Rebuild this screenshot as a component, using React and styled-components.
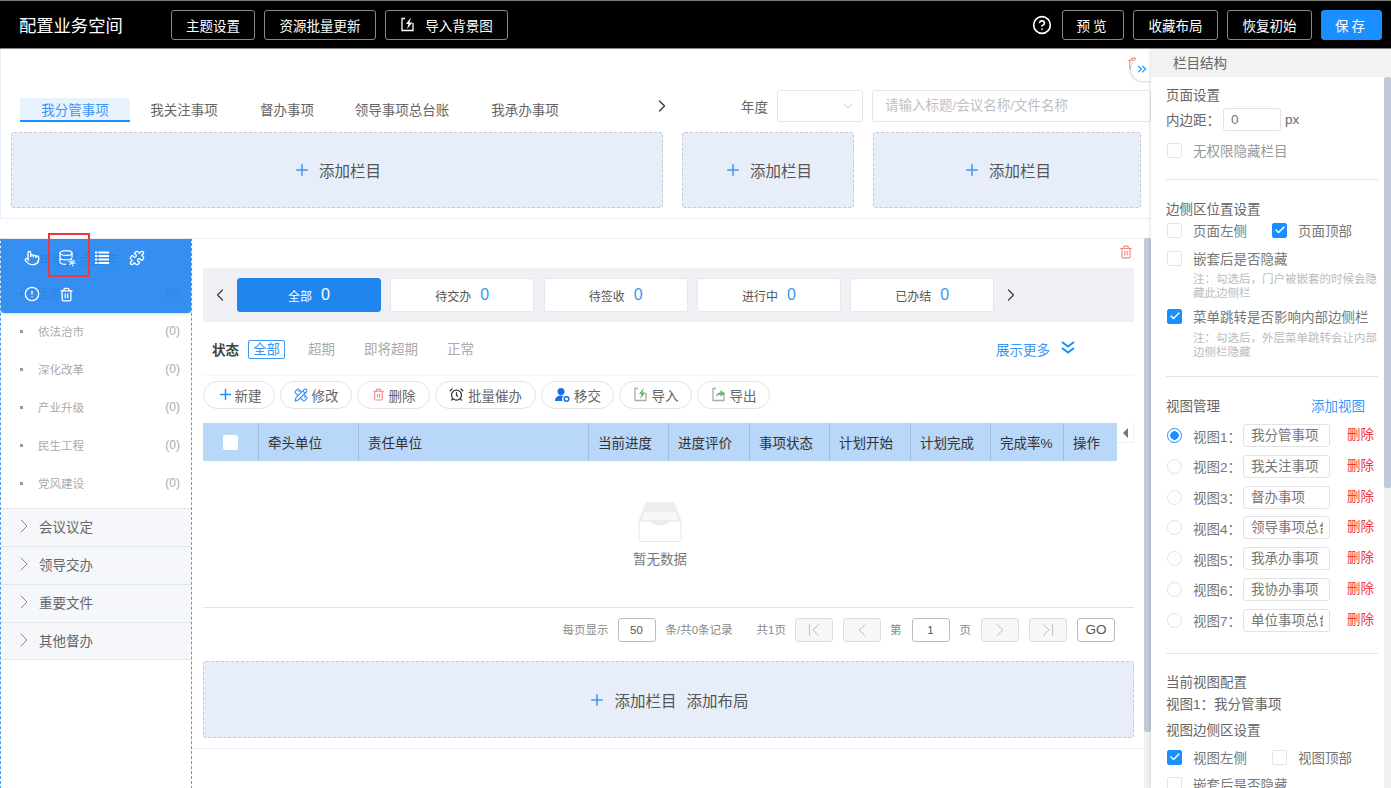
import styled, { createGlobalStyle } from "styled-components";
import {
  AlarmClock,
  Check,
  ChevronDown,
  ChevronFirst,
  ChevronLast,
  ChevronLeft,
  ChevronRight,
  ChevronsRight,
  CircleAlert,
  CircleHelp,
  PencilRuler,
  Plus,
  Pointer,
  Puzzle,
  Trash2,
} from "lucide-react";

const GlobalStyle = createGlobalStyle`
  html, body {
    margin: 0;
    padding: 0;
    background: #fff;
    overflow: hidden;
  }

  * {
    box-sizing: border-box;
  }

  body {
    font-family: "Liberation Sans", "Noto Sans CJK SC", sans-serif;
    color: #666;
  }
`;

const Page = styled.div`
  width: 1391px;
  height: 788px;
  overflow: hidden;
  display: flex;
  flex-direction: column;
`;

const Header = styled.header`
  height: 49px;
  flex: none;
  display: flex;
  align-items: center;
  padding: 0 9px 0 19px;
  background: #000;
  border-top: 1px solid #777;
  border-bottom: 1px solid #888;
`;

const Logo = styled.div`
  width: 152px;
  font-size: 17.3px;
  color: #fff;
`;

const HeadButton = styled.button`
  height: 30px;
  width: ${(p) => p.$w}px;
  margin-left: ${(p) => p.$ml || 0}px;
  display: flex;
  align-items: center;
  justify-content: center;
  gap: 10px;
  padding: 0;
  font: inherit;
  font-size: 13.5px;
  letter-spacing: ${(p) => p.$ls || 0}px;
  color: #fff;
  background: ${(p) => (p.$primary ? "#1a8fff" : "#000")};
  border: 1px solid ${(p) => (p.$primary ? "#1a8fff" : "#888")};
  border-radius: 3px;
`;

const HeaderRight = styled.div`
  margin-left: auto;
  display: flex;
  align-items: center;
  color: #fff;
`;

const Workspace = styled.div`
  flex: 1;
  min-height: 0;
  display: flex;
`;

const Main = styled.main`
  width: 1151px;
  flex: none;
  display: flex;
  flex-direction: column;
  position: relative;
`;

const TopSection = styled.section`
  height: 170px;
  flex: none;
  padding: 41px 0 0 10px;
  border: 1px solid #e9effa;
  border-top: 0;
  border-right: 0;
`;

const TabsRow = styled.div`
  display: flex;
  align-items: center;
  height: 32px;
`;

const Tabs = styled.div`
  display: flex;
  align-items: flex-end;
  align-self: flex-end;
  margin-left: 9px;
`;

const Tab = styled.div`
  width: ${(p) => p.$w}px;
  height: 24px;
  padding-top: 1px;
  line-height: 24px;
  text-align: center;
  font-size: 13.5px;
  color: ${(p) => (p.$active ? "#3d96f5" : "#666")};
  background: ${(p) => (p.$active ? "#e8f3fd" : "transparent")};
  border-bottom: 2px solid ${(p) => (p.$active ? "#1a8fff" : "transparent")};
  border-radius: 3px 3px 0 0;
`;

const TabNext = styled.div`
  width: 20px;
  margin-left: 70px;
  display: flex;
  justify-content: center;
  color: #333;
`;

const YearLabel = styled.div`
  margin-left: 69px;
  font-size: 13.5px;
`;

const YearSelect = styled.div`
  width: 86px;
  height: 32px;
  margin-left: 9px;
  display: flex;
  align-items: center;
  justify-content: flex-end;
  padding-right: 6px;
  color: #ccc;
  border: 1px solid #e5e5e5;
  border-radius: 3px;
`;

const SearchBox = styled.div`
  width: 279px;
  height: 32px;
  margin-left: 9px;
  padding-left: 12px;
  line-height: 30px;
  font-size: 13.5px;
  color: #bfbfbf;
  border: 1px solid #e5e5e5;
  border-radius: 3px;
`;

const AddGrid = styled.div`
  display: grid;
  grid-template-columns: 652px 172px 268px;
  column-gap: 19px;
  margin-top: 10px;
`;

const AddCard = styled.div`
  height: ${(p) => p.$h}px;
  display: flex;
  align-items: center;
  justify-content: center;
  gap: 8px;
  font-size: 15.5px;
  color: #555;
  background: #e8eef9;
  border: 1px dashed #c5cbd8;
  border-radius: 3px;

  svg {
    color: #3d96f5;
  }
`;

const InlineText = styled.span`
  margin-left: ${(p) => p.$ml || 0}px;
`;

const TopTrash = styled.div`
  position: absolute;
  top: 7px;
  left: 1127px;
  color: #f08a8a;
`;

const CollapseTab = styled.div`
  position: absolute;
  top: 8px;
  left: 1131px;
  width: 22px;
  height: 24px;
  display: flex;
  align-items: center;
  justify-content: center;
  color: #1a8fff;
  background: #fff;
  border-radius: 12px 0 0 12px;
  box-shadow: -1px 1px 2px rgba(0, 0, 0, 0.15);
`;

const LowerRow = styled.div`
  flex: none;
  height: 551px;
  margin-top: 19px;
  display: flex;
`;

const Sidebar = styled.aside`
  width: 192px;
  flex: none;
  position: relative;
  border-left: 1px dashed #4a9cf5;
  border-right: 1px dashed #4a9cf5;
  border-top: 1px solid #eef0f5;
`;

const SideTitle = styled.div`
  height: 35px;
  padding: 10px 0 0 38px;
  font-size: 13px;
  color: #3d96f5;
`;

const SideItem = styled.div`
  height: 38px;
  display: flex;
  align-items: center;
  padding: 0 11px 0 19px;
  font-size: 11.5px;
  color: #aaa;

  &::before {
    content: "";
    width: 3px;
    height: 3px;
    margin-right: 15px;
    background: #999;
  }

  span:last-child {
    margin-left: auto;
    font-size: 12px;
  }
`;

const SideGroups = styled.div`
  margin-top: 6px;
`;

const SideGroup = styled.div`
  height: 38px;
  display: flex;
  align-items: center;
  gap: 3px;
  padding: 0 0 3px 11px;
  font-size: 13.5px;
  color: #666;
  background: #f5f7fb;
  border-top: 1px solid #e2e6ee;

  &:last-child {
    border-bottom: 1px solid #e2e6ee;
  }

  svg {
    color: #888;
  }
`;

const HoverMask = styled.div`
  position: absolute;
  top: 0;
  left: 0;
  width: 190px;
  height: 74px;
  display: grid;
  grid-template-columns: repeat(4, 35px);
  grid-auto-rows: 36px;
  align-items: center;
  justify-items: center;
  padding: 1px 0 0 13px;
  color: #fff;
  background: rgba(31, 131, 238, 0.9);
  border-radius: 0 0 3px 3px;
  box-shadow: 0 1px 3px rgba(0, 0, 0, 0.15);
`;

const RedMark = styled.div`
  position: absolute;
  top: -6px;
  left: 47px;
  width: 42px;
  height: 44px;
  border: 2px solid #ee3a3a;
`;

const Content = styled.section`
  flex: 1;
  height: 511px;
  position: relative;
  padding: 29px 10px 0 11px;
  border-top: 1px solid #eef0f5;
  border-bottom: 1px solid #eef0f5;
`;

const ContentTrash = styled.div`
  position: absolute;
  top: 6px;
  right: 11px;
  color: #f08a8a;
`;

const StatStrip = styled.div`
  height: 54px;
  display: flex;
  align-items: center;
  background: #f0f1f5;
  color: #444;
`;

const StripArrow = styled.div`
  width: 34px;
  display: flex;
  justify-content: center;
  flex: none;
`;

const StatList = styled.div`
  display: flex;
  gap: 9.3px;
`;

const StatCard = styled.div`
  width: 144px;
  height: 34px;
  display: flex;
  align-items: center;
  justify-content: center;
  gap: 9px;
  font-size: 12px;
  color: ${(p) => (p.$active ? "#fff" : "#555")};
  background: ${(p) => (p.$active ? "#2086ee" : "#fff")};
  border: 1px solid ${(p) => (p.$active ? "#2086ee" : "#e6e8ee")};
  border-radius: 3px;

  b {
    font-size: 16px;
    font-weight: 400;
    color: ${(p) => (p.$active ? "#fff" : "#3d96f5")};
  }
`;

const FilterRow = styled.div`
  height: 54px;
  display: flex;
  align-items: center;
  padding: 1px 59px 0 9px;
  font-size: 13.5px;
  color: #aaa;
  border-bottom: 1px solid #f6f6f6;
`;

const FilterLabel = styled.b`
  color: #444;
  margin-right: 9px;
`;

const FilterChip = styled.span`
  margin-right: ${(p) => p.$mr || 0}px;
  padding: 0 4px;
  line-height: 17px;
  color: ${(p) => (p.$active ? "#3d96f5" : "#aaa")};
  border: 1px solid ${(p) => (p.$active ? "#3d96f5" : "transparent")};
  border-radius: 2px;
`;

const MoreLink = styled.div`
  margin-left: auto;
  display: flex;
  align-items: center;
  gap: 11px;
  color: #3d96f5;

  svg {
    color: #1a8fff;
    margin-top: -3px;
  }
`;

const Toolbar = styled.div`
  display: flex;
  gap: 5px;
  margin-top: 5px;
`;

const ToolButton = styled.div`
  width: ${(p) => p.$w}px;
  height: 28px;
  display: flex;
  align-items: center;
  justify-content: center;
  gap: ${(p) => p.$gap || 4}px;
  padding-bottom: 1px;
  font-size: 13.5px;
  color: #666;
  background: #fff;
  border: 1px solid #e4e4e4;
  border-radius: 14px;

  svg {
    color: ${(p) => p.$icon};
  }
`;

const TableWrap = styled.div`
  margin-top: 14px;
  height: 185px;
  border-bottom: 1px solid #e2e2e2;
`;

const TableHead = styled.div`
  height: 38px;
  display: flex;
`;

const HeadCells = styled.div`
  width: 914px;
  display: flex;
  background: #b9d7f8;
`;

const HeadCell = styled.div`
  width: ${(p) => p.$w}px;
  display: flex;
  align-items: center;
  justify-content: ${(p) => (p.$center ? "center" : "flex-start")};
  padding-left: ${(p) => (p.$center ? 0 : 9)}px;
  font-size: 13.5px;
  color: #333;
  border-left: ${(p) => (p.$first ? "0" : "1px solid #a3bedd")};
`;

const HeadCheck = styled.i`
  width: 15px;
  height: 15px;
  background: #fff;
  border-radius: 2px;
`;

const ColumnToggle = styled.div`
  flex: 1;
  height: 20px;
  display: flex;
  align-items: center;
  justify-content: center;
  border-right: 1px solid #eee;
  border-bottom: 1px solid #eee;

  &::before {
    content: "";
    border: 5px solid transparent;
    border-left: 0;
    border-right: 5px solid #777;
  }
`;

const Empty = styled.div`
  display: flex;
  flex-direction: column;
  align-items: center;
  width: 914px;
  padding-top: 40px;
  font-size: 13.5px;
  color: #777;

  svg {
    margin-bottom: 6px;
  }
`;

const Pager = styled.div`
  height: 43px;
  margin-top: 10px;
  display: flex;
  align-items: flex-start;
  justify-content: flex-end;
  padding-right: 19px;
  font-size: 11.5px;
  line-height: 24px;
  color: #888;
`;

const PagerText = styled.span`
  margin-left: ${(p) => p.$ml}px;
`;

const PagerBox = styled.div`
  width: 38px;
  height: 24px;
  margin-left: ${(p) => p.$ml}px;
  display: flex;
  align-items: center;
  justify-content: center;
  font-size: ${(p) => (p.$big ? 13.5 : 11.5)}px;
  color: ${(p) => (p.$off ? "#bbb" : "#555")};
  background: ${(p) => (p.$off ? "#f7f7f7" : "#fff")};
  border: 1px solid ${(p) => (p.$off ? "#ddd" : "#bbb")};
  border-radius: 3px;
`;

const ScrollRail = styled.div`
  width: 7px;
  flex: none;
  background: #f1f1f1;
`;

const RailThumb = styled.div`
  height: ${(p) => p.$h}px;
  background: #c0c9d8;
  border-radius: 2px;
`;

const Panel = styled.aside`
  flex: 1;
  position: relative;
  z-index: 2;
  display: flex;
  flex-direction: column;
  background: #fff;
  box-shadow: -1px 0 3px rgba(0, 0, 0, 0.12);
`;

const PanelTitle = styled.div`
  height: 28px;
  flex: none;
  padding-left: 22px;
  line-height: 29px;
  font-size: 13.5px;
  color: #666;
  background: #f2f2f2;
`;

const PanelScroll = styled.div`
  flex: 1;
  min-height: 0;
  display: flex;
`;

const PanelBody = styled.div`
  flex: 1;
  overflow: hidden;
  padding: 0 6px 0 15px;
  font-size: 13.5px;
  color: #666;
`;

const SectionTitle = styled.div`
  height: 20px;
  line-height: 20px;
  margin-top: ${(p) => p.$mt}px;
  display: flex;
  justify-content: space-between;
  padding-right: ${(p) => (p.$pr ? 13 : 0)}px;

  a {
    color: #3d96f5;
  }
`;

const PaddingRow = styled.div`
  height: 24px;
  margin-top: 1px;
  display: flex;
  align-items: center;
`;

const SmallInput = styled.div`
  width: ${(p) => p.$w}px;
  height: 23px;
  margin-left: ${(p) => p.$ml || 0}px;
  padding-left: 7px;
  overflow: hidden;
  white-space: nowrap;
  line-height: 21px;
  font-size: 13.5px;
  color: #777;
  border: 1px solid #e2e2e2;
  border-radius: 3px;
`;

const CheckRow = styled.div`
  height: 20px;
  margin-top: ${(p) => p.$mt}px;
  display: flex;
  align-items: center;
  font-size: 13.5px;
  color: ${(p) => (p.$dim ? "#999" : "#777")};
`;

const CheckBox = styled.span`
  width: 15px;
  height: 15px;
  flex: none;
  margin: 0 11px 0 ${(p) => p.$ml || 1}px;
  display: flex;
  align-items: center;
  justify-content: center;
  color: #fff;
  background: ${(p) => (p.$on ? "#1a8fff" : "#fff")};
  border: 1px solid ${(p) => (p.$on ? "#1a8fff" : "#e4e4e4")};
  border-radius: 2px;
`;

const Note = styled.div`
  margin-top: ${(p) => p.$mt}px;
  padding-left: 27px;
  font-size: 11.5px;
  line-height: 14px;
  color: #bbb;
`;

const Divider = styled.div`
  height: 1px;
  margin-top: ${(p) => p.$mt}px;
  background: #e4e4e4;
`;

const ViewList = styled.div`
  display: grid;
  row-gap: 7.8px;
  margin-top: 7px;
`;

const ViewRow = styled.div`
  height: 23px;
  display: flex;
  align-items: center;
  color: #777;
`;

const Radio = styled.span`
  width: 15px;
  height: 15px;
  margin: 0 11px 0 1px;
  flex: none;
  border: 1px solid ${(p) => (p.$on ? "#1a8fff" : "#e2e2e2")};
  border-radius: 50%;
  background: ${(p) =>
    p.$on ? "radial-gradient(circle, #1a8fff 0 4px, #fff 4.5px)" : "#fff"};
`;

const ViewName = styled.span`
  width: 50px;
  flex: none;
`;

const RemoveLink = styled.span`
  margin: -5px 0 0 17px;
  color: #f5333f;
`;

const InputClip = styled.div`
  width: 72px;
  overflow: hidden;
`;

const tabs = [
  { label: "我分管事项", w: 110, active: true },
  { label: "我关注事项", w: 108 },
  { label: "督办事项", w: 98 },
  { label: "领导事项总台账", w: 132 },
  { label: "我承办事项", w: 114 },
];

const sideItems = ["依法治市", "深化改革", "产业升级", "民生工程", "党风建设"];
const sideGroups = ["会议议定", "领导交办", "重要文件", "其他督办"];
const stats = ["全部", "待交办", "待签收", "进行中", "已办结"];

const columns = [
  { label: "牵头单位", w: 100 },
  { label: "责任单位", w: 230 },
  { label: "当前进度", w: 80 },
  { label: "进度评价", w: 81 },
  { label: "事项状态", w: 80 },
  { label: "计划开始", w: 81 },
  { label: "计划完成", w: 80 },
  { label: "完成率%", w: 73 },
  { label: "操作", w: 54 },
];

const views = [
  "我分管事项",
  "我关注事项",
  "督办事项",
  "领导事项总台账",
  "我承办事项",
  "我协办事项",
  "单位事项总台账",
];

const DatabaseGear = () => (
  <svg width="18" height="18" viewBox="0 0 18 18" fill="none" stroke="currentColor" strokeWidth="1.3">
    <ellipse cx="8" cy="4" rx="6" ry="2.4" />
    <path d="M2 4v9c0 1.3 2.7 2.4 6 2.400M14 4v4M2 8.500c0 1.300 2.700 2.400 6 2.400s6-1 6-2.400" />
    <circle cx="14" cy="13.500" r="1.300" strokeWidth="1.500" />
    <circle cx="14" cy="13.500" r="3" strokeWidth="1.200" strokeDasharray="1.500 1.600" />
  </svg>
);

const DenseList = () => (
  <svg width="14" height="14" viewBox="0 0 14 14" fill="currentColor">
    <rect x="0" y="0.500" width="2.500" height="2" />
    <rect x="3.500" y="0.500" width="10.500" height="2" />
    <rect x="0" y="4" width="2.500" height="2" />
    <rect x="3.500" y="4" width="10.500" height="2" />
    <rect x="0" y="7.500" width="2.500" height="2" />
    <rect x="3.500" y="7.500" width="10.500" height="2" />
    <rect x="0" y="11" width="2.500" height="2" />
    <rect x="3.500" y="11" width="10.500" height="2" />
  </svg>
);

const DoubleDown = () => (
  <svg width="14" height="13" viewBox="0 0 14 13" fill="none" stroke="currentColor" strokeWidth="2">
    <path d="M1 1l6 4.500L13 1M1 7l6 4.500L13 7" />
  </svg>
);

const FileArrow = ({ line, arrow, up }) => (
  <svg width="15" height="15" viewBox="0 0 15 15" fill="none">
    <path d="M5 1.500H2v12h11V6" stroke={line} strokeWidth="1.300" />
    {up ? (
      <path d="M5 10c0-3 2-4.500 4.500-4.500V3L14 6.500 9.500 9.500V7.500C7.500 7.500 6 8.500 5 10z" fill={arrow} />
    ) : (
      <path d="M11 0.500L6 7h2.500L7 12l5.500-6.500H9.500z" fill={arrow} />
    )}
  </svg>
);

const UserGear = () => (
  <svg width="16" height="16" viewBox="0 0 16 16" fill="currentColor">
    <circle cx="7" cy="4.500" r="3.500" />
    <path d="M1 14c0-3.500 2.500-5.500 6-5.500 1 0 1.800.2 2.500.5-.9.800-1.500 2-1.500 3.200 0 .7.200 1.300.5 1.800z" />
    <circle cx="12.500" cy="12" r="2.300" fill="none" stroke="currentColor" strokeWidth="1.500" />
  </svg>
);

const EmptyBox = () => (
  <svg width="46" height="41" viewBox="0 0 46 41">
    <path d="M9 1h28l7 17v21H2V18z" fill="#eee" />
    <path d="M8 11h30l3 8H5z" fill="#f8f8f8" />
    <path
      d="M2 20h12c2 5 16 5 18 0h12v19a1.500 1.500 0 0 1-1.500 1.500h-39A1.500 1.500 0 0 1 2 39z"
      fill="#fff"
      stroke="#e8e8e8"
    />
  </svg>
);

const App = () => {
  return (
    <>
      <GlobalStyle />
      <Page>
        <Header>
          <Logo>配置业务空间</Logo>
          <HeadButton $w={84}>主题设置</HeadButton>
          <HeadButton $w={112} $ml={9}>资源批量更新</HeadButton>
          <HeadButton $w={123} $ml={9}>
            <FileArrow line="#fff" arrow="#fff" />
            导入背景图
          </HeadButton>
          <HeaderRight>
            <CircleHelp size={20} />
            <HeadButton $w={62} $ml={10} $ls={3}>预览</HeadButton>
            <HeadButton $w={85} $ml={9}>收藏布局</HeadButton>
            <HeadButton $w={85} $ml={9}>恢复初始</HeadButton>
            <HeadButton $w={61} $ml={9} $ls={3} $primary>保存</HeadButton>
          </HeaderRight>
        </Header>

        <Workspace>
          <Main>
            <TopSection>
              <TabsRow>
                <Tabs>
                  {tabs.map((tab) => (
                    <Tab key={tab.label} $w={tab.w} $active={tab.active}>
                      {tab.label}
                    </Tab>
                  ))}
                </Tabs>
                <TabNext>
                  <ChevronRight size={20} strokeWidth={1.5} />
                </TabNext>
                <YearLabel>年度</YearLabel>
                <YearSelect>
                  <ChevronDown size={16} strokeWidth={1.5} />
                </YearSelect>
                <SearchBox>请输入标题/会议名称/文件名称</SearchBox>
              </TabsRow>
              <AddGrid>
                <AddCard $h={76}>
                  <Plus size={18} />
                  添加栏目
                </AddCard>
                <AddCard $h={76}>
                  <Plus size={18} />
                  添加栏目
                </AddCard>
                <AddCard $h={76}>
                  <Plus size={18} />
                  添加栏目
                </AddCard>
              </AddGrid>
            </TopSection>

            <TopTrash>
              <Trash2 size={13} />
            </TopTrash>
            <CollapseTab>
              <ChevronsRight size={14} />
            </CollapseTab>

            <LowerRow>
              <Sidebar>
                <SideTitle>年度重点工作</SideTitle>
                <SideItem>
                  <span>全部</span>
                  <span>(0)</span>
                </SideItem>
                {sideItems.map((item) => (
                  <SideItem key={item}>
                    <span>{item}</span>
                    <span>(0)</span>
                  </SideItem>
                ))}
                <SideGroups>
                  {sideGroups.map((group) => (
                    <SideGroup key={group}>
                      <ChevronRight size={24} strokeWidth={1} />
                      {group}
                    </SideGroup>
                  ))}
                </SideGroups>
                <HoverMask>
                  <Pointer size={16} />
                  <DatabaseGear />
                  <DenseList />
                  <Puzzle size={16} />
                  <CircleAlert size={16} />
                  <Trash2 size={15} />
                </HoverMask>
                <RedMark />
              </Sidebar>

              <Content>
                <ContentTrash>
                  <Trash2 size={14} />
                </ContentTrash>
                <StatStrip>
                  <StripArrow>
                    <ChevronLeft size={20} strokeWidth={1.5} />
                  </StripArrow>
                  <StatList>
                    {stats.map((stat, index) => (
                      <StatCard key={stat} $active={index === 0}>
                        {stat}
                        <b>0</b>
                      </StatCard>
                    ))}
                  </StatList>
                  <StripArrow>
                    <ChevronRight size={20} strokeWidth={1.5} />
                  </StripArrow>
                </StatStrip>

                <FilterRow>
                  <FilterLabel>状态</FilterLabel>
                  <FilterChip $active $mr={18}>全部</FilterChip>
                  <FilterChip $mr={19}>超期</FilterChip>
                  <FilterChip $mr={19}>即将超期</FilterChip>
                  <FilterChip>正常</FilterChip>
                  <MoreLink>
                    展示更多
                    <DoubleDown />
                  </MoreLink>
                </FilterRow>

                <Toolbar>
                  <ToolButton $w={72} $icon="#1a8fff" $gap={1}>
                    <Plus size={17} />
                    新建
                  </ToolButton>
                  <ToolButton $w={72} $icon="#3d96f5">
                    <PencilRuler size={14} />
                    修改
                  </ToolButton>
                  <ToolButton $w={73} $icon="#f08a8a">
                    <Trash2 size={13} />
                    删除
                  </ToolButton>
                  <ToolButton $w={101} $icon="#333">
                    <AlarmClock size={15} />
                    批量催办
                  </ToolButton>
                  <ToolButton $w={73} $icon="#1a6fe0">
                    <UserGear />
                    移交
                  </ToolButton>
                  <ToolButton $w={73}>
                    <FileArrow line="#aaa" arrow="#5cb85c" />
                    导入
                  </ToolButton>
                  <ToolButton $w={73}>
                    <FileArrow line="#aaa" arrow="#5cb85c" up />
                    导出
                  </ToolButton>
                </Toolbar>

                <TableWrap>
                  <TableHead>
                    <HeadCells>
                      <HeadCell $w={55} $center $first>
                        <HeadCheck />
                      </HeadCell>
                      {columns.map((col) => (
                        <HeadCell key={col.label} $w={col.w}>
                          {col.label}
                        </HeadCell>
                      ))}
                    </HeadCells>
                    <ColumnToggle />
                  </TableHead>
                  <Empty>
                    <EmptyBox />
                    暂无数据
                  </Empty>
                </TableWrap>

                <Pager>
                  <span>每页显示</span>
                  <PagerBox $ml={9}>50</PagerBox>
                  <PagerText $ml={10}>条/共0条记录</PagerText>
                  <PagerText $ml={24}>共1页</PagerText>
                  <PagerBox $ml={9} $off>
                    <ChevronFirst size={22} strokeWidth={1} />
                  </PagerBox>
                  <PagerBox $ml={10} $off>
                    <ChevronLeft size={22} strokeWidth={1} />
                  </PagerBox>
                  <PagerText $ml={9}>第</PagerText>
                  <PagerBox $ml={10}>1</PagerBox>
                  <PagerText $ml={10}>页</PagerText>
                  <PagerBox $ml={10} $off>
                    <ChevronRight size={22} strokeWidth={1} />
                  </PagerBox>
                  <PagerBox $ml={10} $off>
                    <ChevronLast size={22} strokeWidth={1} />
                  </PagerBox>
                  <PagerBox $ml={10} $big>GO</PagerBox>
                </Pager>

                <AddCard $h={77}>
                  <Plus size={18} />
                  添加栏目
                  <InlineText $ml={2}>添加布局</InlineText>
                </AddCard>
              </Content>

              <ScrollRail>
                <RailThumb $h={494} />
              </ScrollRail>
            </LowerRow>
          </Main>

          <Panel>
            <PanelTitle>栏目结构</PanelTitle>
            <PanelScroll>
              <PanelBody>
                <SectionTitle $mt={9}>页面设置</SectionTitle>
                <PaddingRow>
                  内边距：
                  <SmallInput $w={58} $ml={3}>0</SmallInput>
                  <InlineText $ml={4}>px</InlineText>
                </PaddingRow>
                <CheckRow $mt={9} $dim>
                  <CheckBox />
                  无权限隐藏栏目
                </CheckRow>
                <Divider $mt={19} />

                <SectionTitle $mt={20}>边侧区位置设置</SectionTitle>
                <CheckRow $mt={0}>
                  <CheckBox />
                  页面左侧
                  <CheckBox $on $ml={25}>
                    <Check size={12} strokeWidth={3} />
                  </CheckBox>
                  页面顶部
                </CheckRow>
                <CheckRow $mt={8}>
                  <CheckBox />
                  嵌套后是否隐藏
                </CheckRow>
                <Note $mt={4}>注：勾选后，门户被嵌套的时候会隐藏此边侧栏</Note>
                <CheckRow $mt={6}>
                  <CheckBox $on>
                    <Check size={12} strokeWidth={3} />
                  </CheckBox>
                  菜单跳转是否影响内部边侧栏
                </CheckRow>
                <Note $mt={5}>注：勾选后，外层菜单跳转会让内部边侧栏隐藏</Note>
                <Divider $mt={17} />

                <SectionTitle $mt={20} $pr>
                  视图管理
                  <a>添加视图</a>
                </SectionTitle>
                <ViewList>
                  {views.map((view, index) => (
                    <ViewRow key={view}>
                      <Radio $on={index === 0} />
                      <ViewName>视图{index + 1}：</ViewName>
                      <SmallInput $w={87}>
                        <InputClip>{view}</InputClip>
                      </SmallInput>
                      <RemoveLink>删除</RemoveLink>
                    </ViewRow>
                  ))}
                </ViewList>
                <Divider $mt={21.5} />

                <SectionTitle $mt={19}>当前视图配置</SectionTitle>
                <SectionTitle $mt={2}>视图1：我分管事项</SectionTitle>
                <SectionTitle $mt={6}>视图边侧区设置</SectionTitle>
                <CheckRow $mt={6}>
                  <CheckBox $on>
                    <Check size={12} strokeWidth={3} />
                  </CheckBox>
                  视图左侧
                  <CheckBox $ml={25} />
                  视图顶部
                </CheckRow>
                <CheckRow $mt={7}>
                  <CheckBox />
                  嵌套后是否隐藏
                </CheckRow>
              </PanelBody>
              <ScrollRail>
                <RailThumb $h={411} />
              </ScrollRail>
            </PanelScroll>
          </Panel>
        </Workspace>
      </Page>
    </>
  );
};

export default App;
